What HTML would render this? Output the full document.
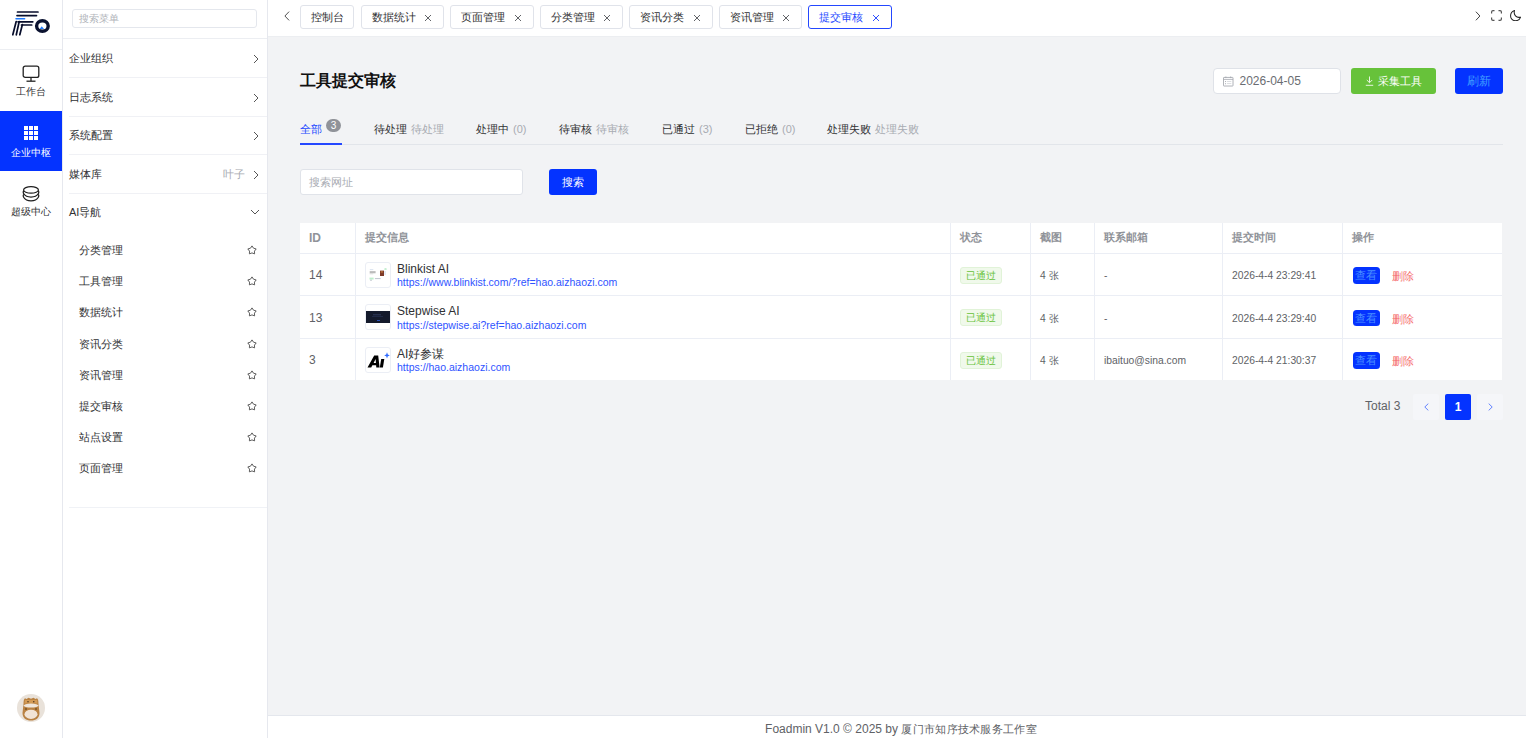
<!DOCTYPE html>
<html><head><meta charset="utf-8">
<style>
*{box-sizing:border-box;margin:0;padding:0}
html,body{width:1526px;height:738px;overflow:hidden;background:#fff;font-family:"Liberation Sans",sans-serif;font-size:12px;color:#303133}
.a{position:absolute}
#rail{left:0;top:0;width:63px;height:738px;background:#fff;border-right:1px solid #e6e8ee}
#sub{left:63px;top:0;width:205px;height:738px;background:#fff;border-right:1px solid #e6e8ee}
#top{left:268px;top:0;width:1258px;height:37px;background:#fff;border-bottom:1px solid #eceef1;z-index:2}
#main{left:268px;top:36px;width:1258px;height:679px;background:#f2f3f5}
#foot{left:268px;top:715px;width:1258px;height:23px;background:#fff;border-top:1px solid #e4e7ed;text-align:center;color:#606266;font-size:11.5px;line-height:26.5px;padding-left:8px}
.tab{position:absolute;top:5px;height:24px;border:1px solid #e0e3ea;border-radius:3px;background:#fff;line-height:22px;padding-left:9.5px;font-size:11px;color:#303133;white-space:nowrap}
.tab svg{position:absolute;right:11px;top:8px}
.tab.act{border-color:#2448ff;color:#2448ff}
.railitem{position:absolute;left:0;width:62px;text-align:center;font-size:10px;color:#303133}
.mi{position:absolute;left:6px;width:198px;height:39px;line-height:38px;font-size:11px;color:#303133;border-bottom:1px solid #f0f1f5}
.mi .r{position:absolute;right:8px;top:15px}
.si{position:absolute;left:16px;font-size:11px;color:#303133;line-height:14px}
.star{position:absolute;left:184px}
.ttab{position:absolute;top:85px;font-size:11px;color:#303133;white-space:nowrap;line-height:16px}
.ttab .g{color:#a8abb2;margin-left:4px;font-size:11px}
th,td{font-weight:normal}
.row{position:absolute;left:0;width:1202px;border-top:1px solid #ebeef5}
.vl{position:absolute;top:0;width:1px;height:157px;background:#ebeef5}
.cell{position:absolute;white-space:nowrap}
.tag{position:absolute;left:660px;width:42px;height:17px;background:#f0f9eb;border:1px solid #e1f3d8;border-radius:3px;color:#67c23a;font-size:10px;line-height:15px;text-align:center}
.view{position:absolute;left:1052.5px;width:27.5px;height:16.5px;background:#0433ff;border-radius:3.5px;color:#4a90ff;font-size:11px;line-height:16px;text-align:center}
.del{position:absolute;left:1092px;color:#f56c6c;font-size:10.5px;line-height:16px}
.thumb{position:absolute;left:65px;width:26px;height:26px;border:1px solid #ebeef5;border-radius:3px;background:#fff;overflow:hidden}
.nm{position:absolute;left:97px;font-size:12px;color:#303133;line-height:14px}
.url{position:absolute;left:97px;font-size:10.5px;color:#2f54ff;line-height:12px}
.sm{font-size:10.3px;color:#606266;line-height:12px}
</style></head><body>

<!-- left rail -->
<div id="rail" class="a">
  <svg class="a" style="left:0;top:0" width="62" height="49" viewBox="0 0 62 49">
    <g stroke="#070d2b" stroke-width="1.7" stroke-linecap="round" fill="none">
      <line x1="17.5" y1="12" x2="38" y2="12"/>
      <line x1="17" y1="15.6" x2="36.5" y2="15.6"/>
      <line x1="18" y1="21.8" x2="32.8" y2="21.8"/>
      <line x1="21.5" y1="25" x2="31.7" y2="25"/>
      <line x1="12.8" y1="34.8" x2="16.2" y2="21.5"/>
      <line x1="16.3" y1="34.8" x2="19.2" y2="21.5"/>
      <line x1="19.8" y1="34.8" x2="22.4" y2="24.5"/>
    </g>
    <line x1="16" y1="18.8" x2="24.6" y2="18.8" stroke="#1f7bff" stroke-width="1.5" stroke-linecap="round"/>
    <ellipse cx="42.4" cy="26" rx="5.8" ry="5.3" fill="none" stroke="#0b1230" stroke-width="3.4"/>
    <path d="M39.6 29 L41.8 26.2 L44 29 Z" fill="#1f7bff"/>
  </svg>
  <div class="a" style="left:0;top:49px;width:62px;height:1px;background:#eceef2"></div>
  <svg class="a" style="left:22px;top:65px" width="18" height="18" viewBox="0 0 18 18">
    <rect x="1.2" y="1.2" width="15.6" height="11.2" rx="2" fill="none" stroke="#222" stroke-width="1.3"/>
    <line x1="9" y1="12.5" x2="9" y2="16" stroke="#222" stroke-width="1.3"/>
    <line x1="4.5" y1="16.2" x2="13.5" y2="16.2" stroke="#222" stroke-width="1.3"/>
  </svg>
  <div class="railitem" style="top:85px">工作台</div>
  <div class="a" style="left:0;top:111px;width:62px;height:60px;background:#0433ff"></div>
  <svg class="a" style="left:24px;top:126px" width="14" height="14" viewBox="0 0 14 14" fill="#fff">
    <rect x="0" y="0" width="4" height="4"/><rect x="5" y="0" width="4" height="4"/><rect x="10" y="0" width="4" height="4"/>
    <rect x="0" y="5" width="4" height="4"/><rect x="5" y="5" width="4" height="4"/><rect x="10" y="5" width="4" height="4"/>
    <rect x="0" y="10" width="4" height="4"/><rect x="5" y="10" width="4" height="4"/><rect x="10" y="10" width="4" height="4"/>
  </svg>
  <div class="railitem" style="top:146px;color:#fff">企业中枢</div>
  <svg class="a" style="left:22px;top:185px" width="18" height="18" viewBox="0 0 18 18">
    <g fill="none" stroke="#1e1e1e" stroke-width="1.25">
      <ellipse cx="9" cy="4.9" rx="7.4" ry="3.3"/>
      <path d="M1.7 5.6 C1.1 6.6 1.1 7.8 1.8 8.8 C3 10.8 6 12 9 12 C12 12 15 10.8 16.2 8.8 C16.9 7.8 16.9 6.6 16.3 5.6"/>
      <path d="M1.7 9.3 C1.1 10.3 1.1 11.5 1.8 12.5 C3 14.5 6 15.8 9 15.8 C12 15.8 15 14.5 16.2 12.5 C16.9 11.5 16.9 10.3 16.3 9.3"/>
    </g>
  </svg>
  <div class="railitem" style="top:205px">超级中心</div>
  <svg class="a" style="left:17px;top:694px" width="28" height="28" viewBox="0 0 28 28">
    <circle cx="14" cy="14" r="14" fill="#e9e2da"/>
    <path d="M6.5 10 C6.5 6.5 7 5 8 4.3 L9.5 5 L11.5 3.8 L14 4.8 L16.5 3.8 L18.5 5 L20 4.3 C21 5 21.5 6.5 21.5 10 L22.5 19 C22.5 24 19 26.5 14 26.5 C9 26.5 5.5 24 5.5 19 Z" fill="#b98243"/>
    <path d="M8 6 L20 6 L20.5 9.5 L7.5 9.5 Z" fill="#d39a55"/>
    <circle cx="9" cy="15" r="1" fill="#7a5228"/><circle cx="19" cy="15" r="1" fill="#7a5228"/><circle cx="10" cy="23" r="1" fill="#7a5228"/><circle cx="18.5" cy="22.5" r="1" fill="#7a5228"/>
    <circle cx="11" cy="7.8" r="0.7" fill="#3a2a1a"/><circle cx="16.8" cy="7.8" r="0.7" fill="#3a2a1a"/>
    <ellipse cx="14" cy="11.6" rx="7.5" ry="2" fill="#efe6dc"/>
    <ellipse cx="14" cy="20.3" rx="6.5" ry="4.6" fill="#f1e3d5"/>
  </svg>
</div>

<!-- sub menu -->
<div id="sub" class="a">
  <div class="a" style="left:9px;top:9px;width:185px;height:19px;border:1px solid #e4e7ed;border-radius:3px;font-size:10px;color:#b0b3b9;line-height:17px;padding-left:6px">搜索菜单</div>
  <div class="a" style="left:0;top:38px;width:204px;height:1px;background:#eceef2"></div>
  <div class="mi" style="top:39px">企业组织<svg class="r" width="6" height="10" viewBox="0 0 6 10"><path d="M1 1 L5 5 L1 9" fill="none" stroke="#555" stroke-width="1"/></svg></div>
  <div class="mi" style="top:77.5px">日志系统<svg class="r" width="6" height="10" viewBox="0 0 6 10"><path d="M1 1 L5 5 L1 9" fill="none" stroke="#555" stroke-width="1"/></svg></div>
  <div class="mi" style="top:116px">系统配置<svg class="r" width="6" height="10" viewBox="0 0 6 10"><path d="M1 1 L5 5 L1 9" fill="none" stroke="#555" stroke-width="1"/></svg></div>
  <div class="mi" style="top:154.5px">媒体库<span style="position:absolute;right:22px;color:#a8abb2;font-size:11px">叶子</span><svg class="r" width="6" height="10" viewBox="0 0 6 10"><path d="M1 1 L5 5 L1 9" fill="none" stroke="#555" stroke-width="1"/></svg></div>
  <div class="mi" style="top:193px;border-bottom:none">AI导航<svg class="r" style="top:16px;right:7px" width="10" height="6" viewBox="0 0 10 6"><path d="M1 1 L5 5 L9 1" fill="none" stroke="#555" stroke-width="1"/></svg></div>
    <div class="si" style="top:243.0px">分类管理</div><svg class="star" style="top:245.0px" width="10" height="10" viewBox="0 0 10 10"><path d="M5.00 0.90 L6.53 3.20 L9.18 3.94 L7.47 6.10 L7.59 8.86 L5.00 7.90 L2.41 8.86 L2.53 6.10 L0.82 3.94 L3.47 3.20 Z" fill="none" stroke="#555" stroke-width="0.95" stroke-linejoin="round"/></svg>
  <div class="si" style="top:274.2px">工具管理</div><svg class="star" style="top:276.2px" width="10" height="10" viewBox="0 0 10 10"><path d="M5.00 0.90 L6.53 3.20 L9.18 3.94 L7.47 6.10 L7.59 8.86 L5.00 7.90 L2.41 8.86 L2.53 6.10 L0.82 3.94 L3.47 3.20 Z" fill="none" stroke="#555" stroke-width="0.95" stroke-linejoin="round"/></svg>
  <div class="si" style="top:305.4px">数据统计</div><svg class="star" style="top:307.4px" width="10" height="10" viewBox="0 0 10 10"><path d="M5.00 0.90 L6.53 3.20 L9.18 3.94 L7.47 6.10 L7.59 8.86 L5.00 7.90 L2.41 8.86 L2.53 6.10 L0.82 3.94 L3.47 3.20 Z" fill="none" stroke="#555" stroke-width="0.95" stroke-linejoin="round"/></svg>
  <div class="si" style="top:336.6px">资讯分类</div><svg class="star" style="top:338.6px" width="10" height="10" viewBox="0 0 10 10"><path d="M5.00 0.90 L6.53 3.20 L9.18 3.94 L7.47 6.10 L7.59 8.86 L5.00 7.90 L2.41 8.86 L2.53 6.10 L0.82 3.94 L3.47 3.20 Z" fill="none" stroke="#555" stroke-width="0.95" stroke-linejoin="round"/></svg>
  <div class="si" style="top:367.8px">资讯管理</div><svg class="star" style="top:369.8px" width="10" height="10" viewBox="0 0 10 10"><path d="M5.00 0.90 L6.53 3.20 L9.18 3.94 L7.47 6.10 L7.59 8.86 L5.00 7.90 L2.41 8.86 L2.53 6.10 L0.82 3.94 L3.47 3.20 Z" fill="none" stroke="#555" stroke-width="0.95" stroke-linejoin="round"/></svg>
  <div class="si" style="top:399.0px">提交审核</div><svg class="star" style="top:401.0px" width="10" height="10" viewBox="0 0 10 10"><path d="M5.00 0.90 L6.53 3.20 L9.18 3.94 L7.47 6.10 L7.59 8.86 L5.00 7.90 L2.41 8.86 L2.53 6.10 L0.82 3.94 L3.47 3.20 Z" fill="none" stroke="#555" stroke-width="0.95" stroke-linejoin="round"/></svg>
  <div class="si" style="top:430.2px">站点设置</div><svg class="star" style="top:432.2px" width="10" height="10" viewBox="0 0 10 10"><path d="M5.00 0.90 L6.53 3.20 L9.18 3.94 L7.47 6.10 L7.59 8.86 L5.00 7.90 L2.41 8.86 L2.53 6.10 L0.82 3.94 L3.47 3.20 Z" fill="none" stroke="#555" stroke-width="0.95" stroke-linejoin="round"/></svg>
  <div class="si" style="top:461.4px">页面管理</div><svg class="star" style="top:463.4px" width="10" height="10" viewBox="0 0 10 10"><path d="M5.00 0.90 L6.53 3.20 L9.18 3.94 L7.47 6.10 L7.59 8.86 L5.00 7.90 L2.41 8.86 L2.53 6.10 L0.82 3.94 L3.47 3.20 Z" fill="none" stroke="#555" stroke-width="0.95" stroke-linejoin="round"/></svg>

  <div class="a" style="left:6px;top:507px;width:198px;height:1px;background:#f0f2f6"></div>
</div>

<!-- top bar -->
<div id="top" class="a">
  <svg class="a" style="left:15.5px;top:10.5px" width="6" height="10" viewBox="0 0 6 10"><path d="M5.1 0.6 L0.9 5 L5.1 9.4" fill="none" stroke="#505050" stroke-width="1"/></svg>
  <div class="tab" style="left:32px;width:54px">控制台</div>
  <div class="tab" style="left:93px;width:83px">数据统计<svg width="8" height="8" viewBox="0 0 8 8"><path d="M1 1 L7 7 M7 1 L1 7" stroke="#5a5c60" stroke-width="0.95"/></svg></div>
  <div class="tab" style="left:182px;width:84px">页面管理<svg width="8" height="8" viewBox="0 0 8 8"><path d="M1 1 L7 7 M7 1 L1 7" stroke="#5a5c60" stroke-width="0.95"/></svg></div>
  <div class="tab" style="left:272px;width:83px">分类管理<svg width="8" height="8" viewBox="0 0 8 8"><path d="M1 1 L7 7 M7 1 L1 7" stroke="#5a5c60" stroke-width="0.95"/></svg></div>
  <div class="tab" style="left:361px;width:84px">资讯分类<svg width="8" height="8" viewBox="0 0 8 8"><path d="M1 1 L7 7 M7 1 L1 7" stroke="#5a5c60" stroke-width="0.95"/></svg></div>
  <div class="tab" style="left:451px;width:83px">资讯管理<svg width="8" height="8" viewBox="0 0 8 8"><path d="M1 1 L7 7 M7 1 L1 7" stroke="#5a5c60" stroke-width="0.95"/></svg></div>
  <div class="tab act" style="left:540px;width:84px">提交审核<svg width="8" height="8" viewBox="0 0 8 8"><path d="M1 1 L7 7 M7 1 L1 7" stroke="#2448ff" stroke-width="0.95"/></svg></div>
  <svg class="a" style="left:1206.5px;top:10.5px" width="6" height="10" viewBox="0 0 6 10"><path d="M0.9 0.7 L4.9 5 L0.9 9.3" fill="none" stroke="#444" stroke-width="1"/></svg>
  <svg class="a" style="left:1223px;top:10px" width="11" height="11" viewBox="0 0 11 11"><path d="M0.6 3.5 V2 Q0.6 0.6 2 0.6 H3.5 M7.5 0.6 H9 Q10.4 0.6 10.4 2 V3.5 M10.4 7.5 V9 Q10.4 10.4 9 10.4 H7.5 M3.5 10.4 H2 Q0.6 10.4 0.6 9 V7.5" fill="none" stroke="#555" stroke-width="1.2"/></svg>
  <svg class="a" style="left:1242px;top:10px" width="11.3" height="11.3" viewBox="0 0 12 12"><path d="M4.8 0.5 C2.2 1.4 0.6 3.7 0.6 6.3 C0.6 9.1 2.9 11.4 5.8 11.4 C8.2 11.4 10.3 10 11.2 7.6 C6.8 8.8 3.4 5 4.8 0.5 Z" fill="none" stroke="#222" stroke-width="1.1" stroke-linejoin="round"/></svg>
</div>

<!-- main -->
<div id="main" class="a">
  <div class="a" style="left:32px;top:35px;font-size:16px;font-weight:bold;color:#111;line-height:20px">工具提交审核</div>

  <div class="a" style="left:945px;top:32px;width:128px;height:26px;background:#fff;border:1px solid #dfe2e8;border-radius:4px">
    <svg class="a" style="left:9px;top:7px" width="10.5" height="10.5" viewBox="0 0 11 11"><rect x="0.5" y="1.5" width="10" height="9" rx="0.5" fill="none" stroke="#a3a6ad" stroke-width="0.9"/><line x1="0.5" y1="3.6" x2="10.5" y2="3.6" stroke="#a3a6ad" stroke-width="0.8"/><line x1="3" y1="0.5" x2="3" y2="2.2" stroke="#a3a6ad" stroke-width="0.8"/><line x1="8" y1="0.5" x2="8" y2="2.2" stroke="#a3a6ad" stroke-width="0.8"/><rect x="2.2" y="5.3" width="1" height="1" fill="#a3a6ad"/><rect x="4.2" y="5.5" width="4.5" height="0.6" fill="#c3c6cc"/><rect x="2.2" y="7.6" width="1" height="1" fill="#a3a6ad"/><rect x="4.2" y="7.8" width="4.5" height="0.6" fill="#c3c6cc"/></svg>
    <div class="a" style="left:25.5px;top:5px;font-size:12px;color:#6a6d72;line-height:14px">2026-04-05</div>
  </div>
  <div class="a" style="left:1083px;top:32px;width:85px;height:26px;background:#67c23a;border-radius:3px;color:#fff;font-size:11px;line-height:26px">
    <svg class="a" style="left:14px;top:8px" width="9" height="10" viewBox="0 0 9 10"><path d="M4.5 0.5 V6.5 M1.8 4 L4.5 6.7 L7.2 4 M0.8 9.3 H8.2" fill="none" stroke="#e8f5e0" stroke-width="1"/></svg>
    <span class="a" style="left:27px;top:0">采集工具</span>
  </div>
  <div class="a" style="left:1187px;top:32px;width:48px;height:26px;background:#0433ff;border-radius:3px;color:#409eff;font-size:12px;line-height:26px;text-align:center;font-weight:500">刷新</div>

  <!-- tabs -->
  <div class="ttab" style="left:32px;color:#2448ff">全部</div>
  <div class="a" style="left:58px;top:83px;width:15px;height:13px;border-radius:7px;background:#909399;color:#fff;font-size:10px;line-height:13px;text-align:center">3</div>
  <div class="ttab" style="left:106px">待处理<span class="g">待处理</span></div>
  <div class="ttab" style="left:208px">处理中<span class="g">(0)</span></div>
  <div class="ttab" style="left:291px">待审核<span class="g">待审核</span></div>
  <div class="ttab" style="left:394px">已通过<span class="g">(3)</span></div>
  <div class="ttab" style="left:477px">已拒绝<span class="g">(0)</span></div>
  <div class="ttab" style="left:559px">处理失败<span class="g">处理失败</span></div>
  <div class="a" style="left:32px;top:108px;width:1203px;height:1px;background:#e2e5ea"></div>
  <div class="a" style="left:32px;top:107px;width:42px;height:2px;background:#2448ff"></div>

  <!-- search -->
  <div class="a" style="left:32px;top:133px;width:223px;height:26px;background:#fff;border:1px solid #e0e3e9;border-radius:3px;font-size:11px;color:#a8abb2;line-height:24px;padding-left:8px">搜索网址</div>
  <div class="a" style="left:281px;top:133px;width:48px;height:26px;background:#0433ff;border-radius:3px;color:#fff;font-size:11px;line-height:26px;text-align:center">搜索</div>

  <!-- table -->
  <div id="tbl" class="a" style="left:32px;top:187px;width:1202px;height:157px;background:#fff">
<div class="vl" style="left:55px"></div><div class="vl" style="left:650px"></div><div class="vl" style="left:730px"></div><div class="vl" style="left:794px"></div><div class="vl" style="left:922px"></div><div class="vl" style="left:1042px"></div>
<div class="cell" style="left:9px;top:7.5px;font-size:12px;font-weight:bold;color:#909399;line-height:14px">ID</div>
<div class="cell" style="left:65px;top:6.6px;font-size:11px;font-weight:bold;color:#909399;line-height:14px">提交信息</div>
<div class="cell" style="left:660px;top:6.6px;font-size:11px;font-weight:bold;color:#909399;line-height:14px">状态</div>
<div class="cell" style="left:740px;top:6.6px;font-size:11px;font-weight:bold;color:#909399;line-height:14px">截图</div>
<div class="cell" style="left:804px;top:6.6px;font-size:11px;font-weight:bold;color:#909399;line-height:14px">联系邮箱</div>
<div class="cell" style="left:932px;top:6.6px;font-size:11px;font-weight:bold;color:#909399;line-height:14px">提交时间</div>
<div class="cell" style="left:1052px;top:6.6px;font-size:11px;font-weight:bold;color:#909399;line-height:14px">操作</div>
<div class="row" style="top:30px;height:42px"></div>
<div class="cell" style="left:9px;top:45.0px;font-size:12px;color:#606266;line-height:14px">14</div>
<div class="thumb" style="top:39.2px"><svg width="24" height="24" viewBox="0 0 24 24"><rect x="3.8" y="6.4" width="3.5" height="0.7" fill="#c9d6e8"/><rect x="18.3" y="5.6" width="2.4" height="1" rx="0.5" fill="#8fe0a6"/><rect x="3.7" y="8" width="5.9" height="0.9" fill="#bdbdbd"/><rect x="3.7" y="9.3" width="5.9" height="0.9" fill="#9e9e9e"/><rect x="3.7" y="10.6" width="3.5" height="0.6" fill="#cccccc"/><rect x="3.5" y="14.6" width="4.1" height="1.9" fill="#bdeecb"/><rect x="14" y="7.6" width="4" height="5.4" fill="#7d3a2a"/><rect x="14.8" y="8.2" width="2" height="1.4" fill="#c07a40"/><rect x="18.4" y="8" width="1.5" height="4" fill="#dde8f7"/><rect x="8.9" y="15" width="5.7" height="1.1" fill="#c5cad3"/><rect x="4.5" y="16.6" width="1" height="1.4" fill="#b0b5c0"/></svg></div>
<div class="nm" style="top:38.5px">Blinkist AI</div>
<div class="url" style="top:53.3px">https://www.blinkist.com/?ref=hao.aizhaozi.com</div>
<div class="tag" style="top:43.7px">已通过</div>
<div class="cell sm" style="left:740px;top:47.0px">4 张</div>
<div class="cell sm" style="left:804px;top:47.0px">-</div>
<div class="cell sm" style="left:932px;top:47.0px">2026-4-4 23:29:41</div>
<div class="view" style="top:44.2px">查看</div>
<div class="del" style="top:45.0px">删除</div>
<div class="row" style="top:72px;height:43px"></div>
<div class="cell" style="left:9px;top:87.5px;font-size:12px;color:#606266;line-height:14px">13</div>
<div class="thumb" style="top:81.4px"><svg width="24" height="24" viewBox="0 0 24 24"><rect x="0" y="6" width="24" height="12" fill="#141a2c"/><rect x="7" y="9.5" width="8" height="0.7" fill="#3a4670"/><rect x="6" y="11.2" width="11" height="0.5" fill="#2c3860"/><rect x="11" y="15" width="3" height="0.8" fill="#2f5fe0"/></svg></div>
<div class="nm" style="top:81.0px">Stepwise AI</div>
<div class="url" style="top:95.8px">https://stepwise.ai?ref=hao.aizhaozi.com</div>
<div class="tag" style="top:86.2px">已通过</div>
<div class="cell sm" style="left:740px;top:89.5px">4 张</div>
<div class="cell sm" style="left:804px;top:89.5px">-</div>
<div class="cell sm" style="left:932px;top:89.5px">2026-4-4 23:29:40</div>
<div class="view" style="top:86.7px">查看</div>
<div class="del" style="top:87.5px">删除</div>
<div class="row" style="top:115px;height:42px"></div>
<div class="cell" style="left:9px;top:130.0px;font-size:12px;color:#606266;line-height:14px">3</div>
<div class="thumb" style="top:123.8px"><svg width="24" height="24" viewBox="0 0 24 24"><path d="M1.5 19.5 L8.2 7.6 L12.2 7.6 L13.6 19.5 L10.3 19.5 L10.1 17.3 L6.4 17.3 L5.2 19.5 Z M7.6 15 L9.9 15 L9.6 11 Z" fill="#000" fill-rule="evenodd"/><path d="M15.2 11 L18.3 11 L16.9 19.5 L13.8 19.5 Z" fill="#000"/><path d="M21 4.3 L21.8 6.6 L23.8 7.4 L21.8 8.2 L21 10.5 L20.2 8.2 L18.2 7.4 L20.2 6.6 Z" fill="#2f6bff"/></svg></div>
<div class="nm" style="top:123.5px">AI好参谋</div>
<div class="url" style="top:138.3px">https://hao.aizhaozi.com</div>
<div class="tag" style="top:128.7px">已通过</div>
<div class="cell sm" style="left:740px;top:132.0px">4 张</div>
<div class="cell sm" style="left:804px;top:132.0px">ibaituo@sina.com</div>
<div class="cell sm" style="left:932px;top:132.0px">2026-4-4 21:30:37</div>
<div class="view" style="top:129.2px">查看</div>
<div class="del" style="top:130.0px">删除</div>
  </div>

  <!-- pagination -->
  <div class="a" style="left:1097px;top:363px;font-size:12px;color:#606266;line-height:14px">Total 3</div>
  <div class="a" style="left:1145px;top:358px;width:26px;height:26px;background:#f5f6f9;border-radius:2px">
    <svg class="a" style="left:10.5px;top:9px" width="5" height="8" viewBox="0 0 5 8"><path d="M4.3 0.6 L0.8 4 L4.3 7.4" fill="none" stroke="#5b7cff" stroke-width="0.95"/></svg>
  </div>
  <div class="a" style="left:1177px;top:358px;width:26px;height:26px;background:#0433ff;border-radius:2px;color:#fff;font-size:12px;font-weight:bold;line-height:27px;text-align:center">1</div>
  <div class="a" style="left:1209px;top:358px;width:26px;height:26px;background:#f5f6f9;border-radius:2px">
    <svg class="a" style="left:10.5px;top:9px" width="5" height="8" viewBox="0 0 5 8"><path d="M0.7 0.6 L4.2 4 L0.7 7.4" fill="none" stroke="#5b7cff" stroke-width="0.95"/></svg>
  </div>
</div>

<div id="foot" class="a"><span style="font-size:12px">Foadmin V1.0 © 2025 by </span><span style="font-size:11px;letter-spacing:0.3px">厦门市知序技术服务工作室</span></div>
</body></html>
